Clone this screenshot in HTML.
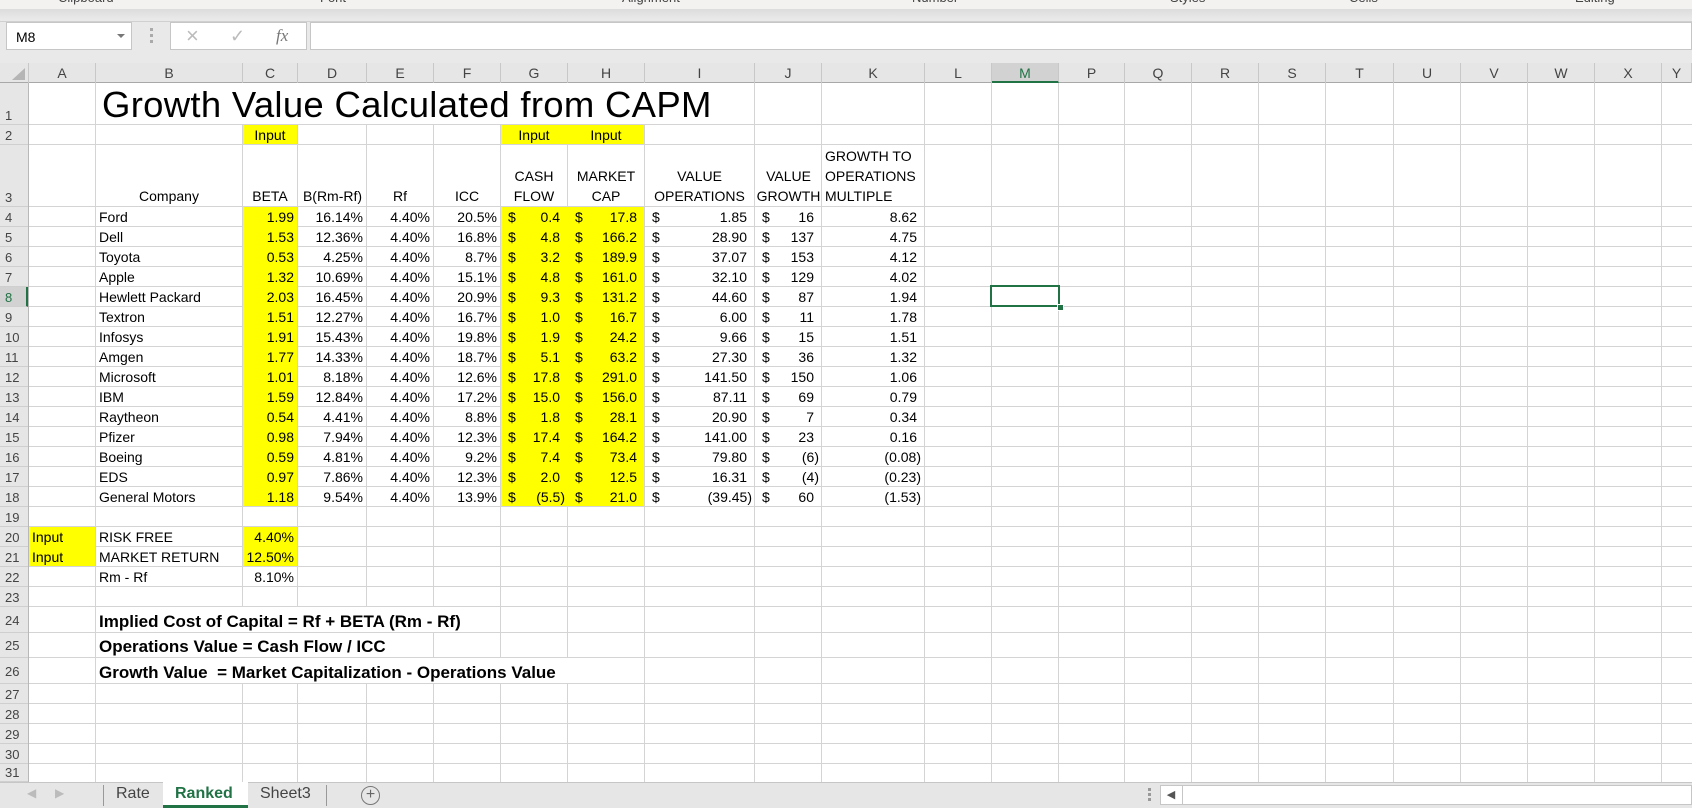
<!DOCTYPE html>
<html><head><meta charset="utf-8"><style>
*{margin:0;padding:0}
body{width:1692px;height:808px;overflow:hidden;background:#fff;font-family:"Liberation Sans",Arial,sans-serif;position:relative;color:#000}
.abs{position:absolute}
.vl{position:absolute;width:1px;background:#d4d4d4;top:83px;height:699px}
.hl{position:absolute;height:1px;background:#d4d4d4;left:29px;width:1663px}
.y{position:absolute;background:#ffff00}
.r{position:absolute;left:29px;height:20px;display:flex;align-items:flex-end;font-size:14px;line-height:18px}
.r>span{flex:none;box-sizing:border-box;padding:0 4px 1px 3px;white-space:nowrap}
.r i{font-style:normal}
.n{text-align:right}
.ctr{text-align:center}
.r>span.c{display:flex;justify-content:space-between;padding:0 8px 1px 7px}
.r>span.c.g{padding-right:3px}
.r>span.nn{padding-right:8px}
.r>span.ng{padding-right:4px}
.A{width:67px}.B{width:147px}.C{width:55px}.D{width:69px}.E{width:67px}.F{width:67px}.G{width:67px}.H{width:77px}.I{width:110px}.J{width:67px}.K{width:103px}
.ch{position:absolute;top:63px;height:20px;line-height:20px;font-size:14px;color:#444;text-align:center;border-right:1px solid #c8c8c8;box-sizing:border-box}
.rh{position:absolute;left:0;width:28px;font-size:13px;color:#444;padding-left:5px;box-sizing:border-box;border-bottom:1px solid #cfcfcf;display:flex;align-items:flex-end;line-height:17px}
.note{position:absolute;left:99px;font-weight:bold;font-size:17px;line-height:19px;white-space:nowrap}
</style></head><body>
<div class="abs" style="left:0;top:0;width:1692px;height:9px;background:#f3f2f1;overflow:hidden;font-size:13px;color:#444">
<span class="abs" style="left:58px;top:-10px">Clipboard</span>
<span class="abs" style="left:320px;top:-10px">Font</span>
<span class="abs" style="left:622px;top:-10px">Alignment</span>
<span class="abs" style="left:912px;top:-10px">Number</span>
<span class="abs" style="left:1170px;top:-10px">Styles</span>
<span class="abs" style="left:1349px;top:-10px">Cells</span>
<span class="abs" style="left:1575px;top:-10px">Editing</span>
</div>
<div class="abs" style="left:0;top:9px;width:1692px;height:54px;background:linear-gradient(#dcdcdc,#e9e9e9 10px,#e9e9e9)"></div>
<div class="abs" style="left:0;top:21px;width:1692px;height:1px;background:#d0d0d0"></div>
<div class="abs" style="left:6px;top:22px;width:126px;height:28px;background:#fff;border:1px solid #c6c6c6;font-size:14px;line-height:28px;padding-left:9px;box-sizing:border-box">M8</div>
<div class="abs" style="left:117px;top:34px;width:0;height:0;border-left:4px solid transparent;border-right:4px solid transparent;border-top:4px solid #777"></div>
<div class="abs" style="left:150px;top:28px;width:3px;height:16px;background:repeating-linear-gradient(#aaa 0 3px,transparent 3px 6px)"></div>
<div class="abs" style="left:170px;top:22px;width:137px;height:28px;background:#fff;border:1px solid #c6c6c6;box-sizing:border-box"></div>
<div class="abs" style="left:186px;top:23px;font-size:22px;color:#bbb;line-height:26px">×</div>
<div class="abs" style="left:230px;top:23px;font-size:18px;color:#bbb;line-height:26px">✓</div>
<div class="abs" style="left:276px;top:23px;font-size:17px;color:#777;line-height:26px;font-family:'Liberation Serif',serif;font-style:italic">fx</div>
<div class="abs" style="left:310px;top:22px;width:1382px;height:28px;background:#fff;border:1px solid #c6c6c6;box-sizing:border-box"></div>
<div class="abs" style="left:0;top:63px;width:1692px;height:20px;background:#e6e6e6;border-bottom:1px solid #a8a8a8;box-sizing:border-box"></div>
<div class="abs" style="left:0;top:63px;width:29px;height:20px;border-right:1px solid #c8c8c8;box-sizing:border-box"></div>
<div class="abs" style="left:12px;top:68px;width:0;height:0;border-left:13px solid transparent;border-bottom:12px solid #b5b5b5"></div>
<div class="ch" style="left:29px;width:67px">A</div>
<div class="ch" style="left:96px;width:147px">B</div>
<div class="ch" style="left:243px;width:55px">C</div>
<div class="ch" style="left:298px;width:69px">D</div>
<div class="ch" style="left:367px;width:67px">E</div>
<div class="ch" style="left:434px;width:67px">F</div>
<div class="ch" style="left:501px;width:67px">G</div>
<div class="ch" style="left:568px;width:77px">H</div>
<div class="ch" style="left:645px;width:110px">I</div>
<div class="ch" style="left:755px;width:67px">J</div>
<div class="ch" style="left:822px;width:103px">K</div>
<div class="ch" style="left:925px;width:67px">L</div>
<div class="ch" style="left:992px;width:67px;background:#d2d2d2;color:#217346;border-bottom:2px solid #217346">M</div>
<div class="ch" style="left:1059px;width:66px">P</div>
<div class="ch" style="left:1125px;width:67px">Q</div>
<div class="ch" style="left:1192px;width:67px">R</div>
<div class="ch" style="left:1259px;width:67px">S</div>
<div class="ch" style="left:1326px;width:68px">T</div>
<div class="ch" style="left:1394px;width:67px">U</div>
<div class="ch" style="left:1461px;width:67px">V</div>
<div class="ch" style="left:1528px;width:67px">W</div>
<div class="ch" style="left:1595px;width:67px">X</div>
<div class="ch" style="left:1662px;width:30px">Y</div>
<div class="abs" style="left:0;top:83px;width:29px;height:699px;background:#e6e6e6;border-right:1px solid #b8b8b8;box-sizing:border-box"></div>
<div class="rh" style="top:83px;height:42px">1</div>
<div class="rh" style="top:125px;height:20px">2</div>
<div class="rh" style="top:145px;height:62px">3</div>
<div class="rh" style="top:207px;height:20px">4</div>
<div class="rh" style="top:227px;height:20px">5</div>
<div class="rh" style="top:247px;height:20px">6</div>
<div class="rh" style="top:267px;height:20px">7</div>
<div class="rh" style="top:287px;height:20px;background:#d2d2d2;color:#217346;border-right:2px solid #217346">8</div>
<div class="rh" style="top:307px;height:20px">9</div>
<div class="rh" style="top:327px;height:20px">10</div>
<div class="rh" style="top:347px;height:20px">11</div>
<div class="rh" style="top:367px;height:20px">12</div>
<div class="rh" style="top:387px;height:20px">13</div>
<div class="rh" style="top:407px;height:20px">14</div>
<div class="rh" style="top:427px;height:20px">15</div>
<div class="rh" style="top:447px;height:20px">16</div>
<div class="rh" style="top:467px;height:20px">17</div>
<div class="rh" style="top:487px;height:20px">18</div>
<div class="rh" style="top:507px;height:20px">19</div>
<div class="rh" style="top:527px;height:20px">20</div>
<div class="rh" style="top:547px;height:20px">21</div>
<div class="rh" style="top:567px;height:20px">22</div>
<div class="rh" style="top:587px;height:20px">23</div>
<div class="rh" style="top:607px;height:26px;padding-bottom:3px">24</div>
<div class="rh" style="top:633px;height:25px;padding-bottom:3px">25</div>
<div class="rh" style="top:658px;height:26px;padding-bottom:3px">26</div>
<div class="rh" style="top:684px;height:20px">27</div>
<div class="rh" style="top:704px;height:20px">28</div>
<div class="rh" style="top:724px;height:20px">29</div>
<div class="rh" style="top:744px;height:20px">30</div>
<div class="rh" style="top:764px;height:18px">31</div>
<div class="vl" style="left:95px"></div><div class="vl" style="left:242px"></div><div class="vl" style="left:297px"></div><div class="vl" style="left:366px"></div><div class="vl" style="left:433px"></div><div class="vl" style="left:500px"></div><div class="vl" style="left:567px"></div><div class="vl" style="left:644px"></div><div class="vl" style="left:754px"></div><div class="vl" style="left:821px"></div><div class="vl" style="left:924px"></div><div class="vl" style="left:991px"></div><div class="vl" style="left:1058px"></div><div class="vl" style="left:1124px"></div><div class="vl" style="left:1191px"></div><div class="vl" style="left:1258px"></div><div class="vl" style="left:1325px"></div><div class="vl" style="left:1393px"></div><div class="vl" style="left:1460px"></div><div class="vl" style="left:1527px"></div><div class="vl" style="left:1594px"></div><div class="vl" style="left:1661px"></div>
<div class="hl" style="top:124px"></div><div class="hl" style="top:144px"></div><div class="hl" style="top:206px"></div>
<div class="hl" style="top:226px"></div><div class="hl" style="top:246px"></div><div class="hl" style="top:266px"></div><div class="hl" style="top:286px"></div><div class="hl" style="top:306px"></div><div class="hl" style="top:326px"></div><div class="hl" style="top:346px"></div><div class="hl" style="top:366px"></div><div class="hl" style="top:386px"></div><div class="hl" style="top:406px"></div><div class="hl" style="top:426px"></div><div class="hl" style="top:446px"></div><div class="hl" style="top:466px"></div><div class="hl" style="top:486px"></div><div class="hl" style="top:506px"></div><div class="hl" style="top:526px"></div><div class="hl" style="top:546px"></div><div class="hl" style="top:566px"></div><div class="hl" style="top:586px"></div><div class="hl" style="top:606px"></div><div class="hl" style="top:632px"></div><div class="hl" style="top:657px"></div><div class="hl" style="top:683px"></div><div class="hl" style="top:703px"></div><div class="hl" style="top:723px"></div><div class="hl" style="top:743px"></div><div class="hl" style="top:763px"></div>
<div class="abs" style="left:96px;top:83px;width:658px;height:41px;background:#fff"></div>
<div class="abs" style="left:96px;top:607px;width:404px;height:25px;background:#fff"></div>
<div class="abs" style="left:96px;top:633px;width:337px;height:24px;background:#fff"></div>
<div class="abs" style="left:96px;top:658px;width:548px;height:25px;background:#fff"></div>
<div class="y" style="left:243px;top:125px;width:54px;height:19px"></div>
<div class="y" style="left:501px;top:125px;width:143px;height:19px"></div>
<div class="y" style="left:243px;top:207px;width:54px;height:299px"></div>
<div class="y" style="left:501px;top:207px;width:143px;height:299px"></div>
<div class="y" style="left:29px;top:527px;width:66px;height:39px"></div>
<div class="y" style="left:243px;top:527px;width:54px;height:39px"></div>
<div class="abs" style="left:990px;top:285px;width:70px;height:22px;border:2px solid #217346;box-sizing:border-box"></div>
<div class="abs" style="left:1057px;top:304px;width:5px;height:5px;background:#217346;border:1px solid #fff"></div>
<div class="abs" style="left:102px;top:87px;font-size:36.5px;line-height:36px;letter-spacing:0.3px;white-space:nowrap">Growth Value Calculated from CAPM</div>
<div class="r" style="top:125px"><span class="A"></span><span class="B"></span><span class="C ctr">Input</span><span class="D"></span><span class="E"></span><span class="F"></span><span class="G ctr">Input</span><span class="H ctr">Input</span></div>
<div class="r" style="top:145px;height:62px;line-height:20px"><span class="A"></span><span class="B ctr">Company</span><span class="C ctr">BETA</span><span class="D ctr" style="padding:0 0 1px 0">B(Rm-Rf)</span><span class="E ctr">Rf</span><span class="F ctr">ICC</span><span class="G ctr">CASH<br>FLOW</span><span class="H ctr">MARKET<br>CAP</span><span class="I ctr">VALUE<br>OPERATIONS</span><span class="J ctr" style="padding:0 0 1px 0">VALUE<br>GROWTH</span><span class="K" style="padding-left:3px">GROWTH TO<br>OPERATIONS<br>MULTIPLE</span></div>
<div class="r" style="top:207px"><span class="A"></span><span class="B">Ford</span><span class="C n">1.99</span><span class="D n">16.14%</span><span class="E n">4.40%</span><span class="F n">20.5%</span><span class="G c"><i>$</i>0.4</span><span class="H c"><i>$</i>17.8</span><span class="I c"><i>$</i>1.85</span><span class="J c"><i>$</i>16</span><span class="K n nn">8.62</span></div>
<div class="r" style="top:227px"><span class="A"></span><span class="B">Dell</span><span class="C n">1.53</span><span class="D n">12.36%</span><span class="E n">4.40%</span><span class="F n">16.8%</span><span class="G c"><i>$</i>4.8</span><span class="H c"><i>$</i>166.2</span><span class="I c"><i>$</i>28.90</span><span class="J c"><i>$</i>137</span><span class="K n nn">4.75</span></div>
<div class="r" style="top:247px"><span class="A"></span><span class="B">Toyota</span><span class="C n">0.53</span><span class="D n">4.25%</span><span class="E n">4.40%</span><span class="F n">8.7%</span><span class="G c"><i>$</i>3.2</span><span class="H c"><i>$</i>189.9</span><span class="I c"><i>$</i>37.07</span><span class="J c"><i>$</i>153</span><span class="K n nn">4.12</span></div>
<div class="r" style="top:267px"><span class="A"></span><span class="B">Apple</span><span class="C n">1.32</span><span class="D n">10.69%</span><span class="E n">4.40%</span><span class="F n">15.1%</span><span class="G c"><i>$</i>4.8</span><span class="H c"><i>$</i>161.0</span><span class="I c"><i>$</i>32.10</span><span class="J c"><i>$</i>129</span><span class="K n nn">4.02</span></div>
<div class="r" style="top:287px"><span class="A"></span><span class="B">Hewlett Packard</span><span class="C n">2.03</span><span class="D n">16.45%</span><span class="E n">4.40%</span><span class="F n">20.9%</span><span class="G c"><i>$</i>9.3</span><span class="H c"><i>$</i>131.2</span><span class="I c"><i>$</i>44.60</span><span class="J c"><i>$</i>87</span><span class="K n nn">1.94</span></div>
<div class="r" style="top:307px"><span class="A"></span><span class="B">Textron</span><span class="C n">1.51</span><span class="D n">12.27%</span><span class="E n">4.40%</span><span class="F n">16.7%</span><span class="G c"><i>$</i>1.0</span><span class="H c"><i>$</i>16.7</span><span class="I c"><i>$</i>6.00</span><span class="J c"><i>$</i>11</span><span class="K n nn">1.78</span></div>
<div class="r" style="top:327px"><span class="A"></span><span class="B">Infosys</span><span class="C n">1.91</span><span class="D n">15.43%</span><span class="E n">4.40%</span><span class="F n">19.8%</span><span class="G c"><i>$</i>1.9</span><span class="H c"><i>$</i>24.2</span><span class="I c"><i>$</i>9.66</span><span class="J c"><i>$</i>15</span><span class="K n nn">1.51</span></div>
<div class="r" style="top:347px"><span class="A"></span><span class="B">Amgen</span><span class="C n">1.77</span><span class="D n">14.33%</span><span class="E n">4.40%</span><span class="F n">18.7%</span><span class="G c"><i>$</i>5.1</span><span class="H c"><i>$</i>63.2</span><span class="I c"><i>$</i>27.30</span><span class="J c"><i>$</i>36</span><span class="K n nn">1.32</span></div>
<div class="r" style="top:367px"><span class="A"></span><span class="B">Microsoft</span><span class="C n">1.01</span><span class="D n">8.18%</span><span class="E n">4.40%</span><span class="F n">12.6%</span><span class="G c"><i>$</i>17.8</span><span class="H c"><i>$</i>291.0</span><span class="I c"><i>$</i>141.50</span><span class="J c"><i>$</i>150</span><span class="K n nn">1.06</span></div>
<div class="r" style="top:387px"><span class="A"></span><span class="B">IBM</span><span class="C n">1.59</span><span class="D n">12.84%</span><span class="E n">4.40%</span><span class="F n">17.2%</span><span class="G c"><i>$</i>15.0</span><span class="H c"><i>$</i>156.0</span><span class="I c"><i>$</i>87.11</span><span class="J c"><i>$</i>69</span><span class="K n nn">0.79</span></div>
<div class="r" style="top:407px"><span class="A"></span><span class="B">Raytheon</span><span class="C n">0.54</span><span class="D n">4.41%</span><span class="E n">4.40%</span><span class="F n">8.8%</span><span class="G c"><i>$</i>1.8</span><span class="H c"><i>$</i>28.1</span><span class="I c"><i>$</i>20.90</span><span class="J c"><i>$</i>7</span><span class="K n nn">0.34</span></div>
<div class="r" style="top:427px"><span class="A"></span><span class="B">Pfizer</span><span class="C n">0.98</span><span class="D n">7.94%</span><span class="E n">4.40%</span><span class="F n">12.3%</span><span class="G c"><i>$</i>17.4</span><span class="H c"><i>$</i>164.2</span><span class="I c"><i>$</i>141.00</span><span class="J c"><i>$</i>23</span><span class="K n nn">0.16</span></div>
<div class="r" style="top:447px"><span class="A"></span><span class="B">Boeing</span><span class="C n">0.59</span><span class="D n">4.81%</span><span class="E n">4.40%</span><span class="F n">9.2%</span><span class="G c"><i>$</i>7.4</span><span class="H c"><i>$</i>73.4</span><span class="I c"><i>$</i>79.80</span><span class="J c g"><i>$</i>(6)</span><span class="K n ng">(0.08)</span></div>
<div class="r" style="top:467px"><span class="A"></span><span class="B">EDS</span><span class="C n">0.97</span><span class="D n">7.86%</span><span class="E n">4.40%</span><span class="F n">12.3%</span><span class="G c"><i>$</i>2.0</span><span class="H c"><i>$</i>12.5</span><span class="I c"><i>$</i>16.31</span><span class="J c g"><i>$</i>(4)</span><span class="K n ng">(0.23)</span></div>
<div class="r" style="top:487px"><span class="A"></span><span class="B">General Motors</span><span class="C n">1.18</span><span class="D n">9.54%</span><span class="E n">4.40%</span><span class="F n">13.9%</span><span class="G c g"><i>$</i>(5.5)</span><span class="H c"><i>$</i>21.0</span><span class="I c g"><i>$</i>(39.45)</span><span class="J c"><i>$</i>60</span><span class="K n ng">(1.53)</span></div>
<div class="r" style="top:527px"><span class="A">Input</span><span class="B">RISK FREE</span><span class="C n">4.40%</span></div>
<div class="r" style="top:547px"><span class="A">Input</span><span class="B">MARKET RETURN</span><span class="C n">12.50%</span></div>
<div class="r" style="top:567px"><span class="A"></span><span class="B">Rm - Rf</span><span class="C n">8.10%</span></div>
<div class="note" style="top:612px">Implied Cost of Capital = Rf + BETA (Rm - Rf)</div>
<div class="note" style="top:637px">Operations Value = Cash Flow / ICC</div>
<div class="note" style="top:663px">Growth Value&nbsp; = Market Capitalization - Operations Value</div>
<div class="abs" style="left:0;top:782px;width:1692px;height:26px;background:#e6e6e6;border-top:1px solid #c6c6c6;box-sizing:border-box"></div>
<div class="abs" style="left:27px;top:786px;font-size:12px;color:#bbb">◀</div>
<div class="abs" style="left:55px;top:786px;font-size:12px;color:#bbb">▶</div>
<div class="abs" style="left:103px;top:785px;width:1px;height:21px;background:#999"></div>
<div class="abs" style="left:116px;top:785px;font-size:16px;color:#444">Rate</div>
<div class="abs" style="left:163px;top:782px;width:85px;height:26px;background:#fff;border-bottom:3px solid #217346;box-sizing:border-box"></div>
<div class="abs" style="left:175px;top:785px;font-size:16px;color:#217346;font-weight:bold">Ranked</div>
<div class="abs" style="left:260px;top:785px;font-size:16px;color:#444">Sheet3</div>
<div class="abs" style="left:326px;top:785px;width:1px;height:21px;background:#999"></div>
<div class="abs" style="left:361px;top:786px;width:17px;height:17px;border:1px solid #777;border-radius:50%;font-size:16px;line-height:16px;text-align:center;color:#666">+</div>
<div class="abs" style="left:1148px;top:788px;width:3px;height:14px;background:repeating-linear-gradient(#999 0 3px,transparent 3px 5px)"></div>
<div class="abs" style="left:1160px;top:785px;width:532px;height:20px;background:#fff;border:1px solid #c6c6c6;box-sizing:border-box"></div>
<div class="abs" style="left:1160px;top:785px;width:22px;height:20px;border-right:1px solid #c6c6c6;font-size:11px;color:#555;text-align:center;line-height:20px">◀</div>
</body></html>
